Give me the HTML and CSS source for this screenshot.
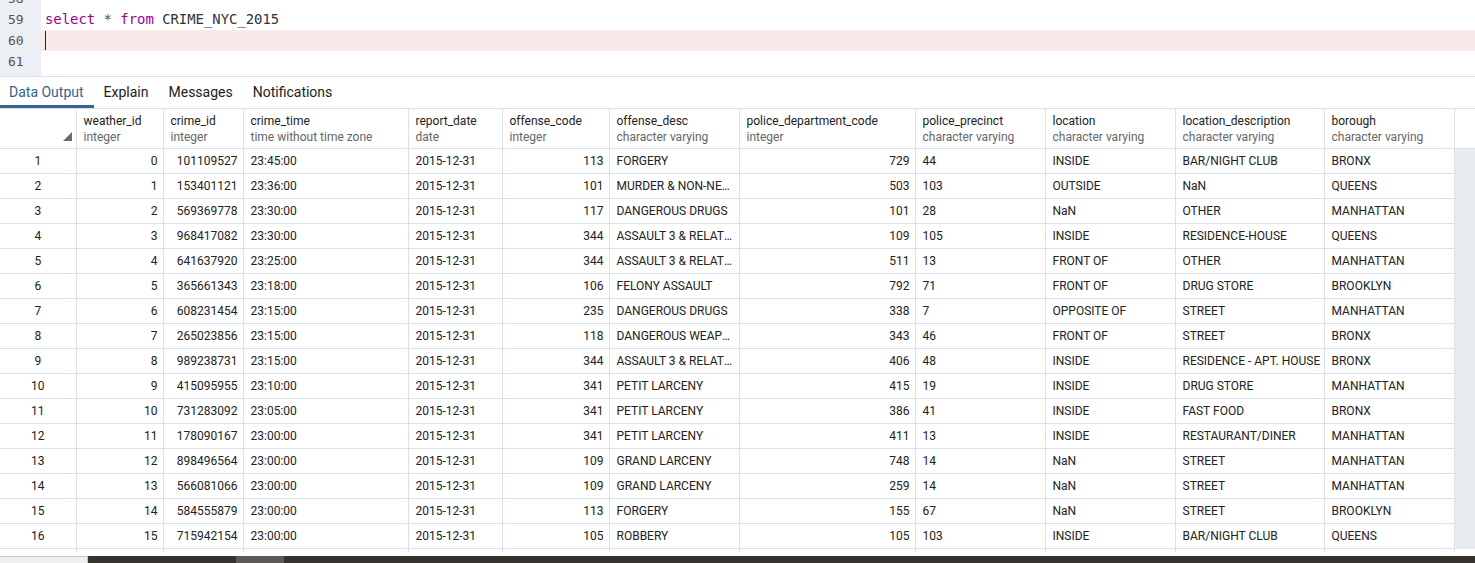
FILE: index.html
```html
<!DOCTYPE html>
<html>
<head>
<meta charset="utf-8">
<link rel="stylesheet" href="styles.css">
</head>
<body>
<div class="editor">
  <div class="editor-inner">
    <div class="line"><span class="ln">58</span><span class="code"></span></div>
    <div class="line"><span class="ln">59</span><span class="code"><span class="kw">select</span> <span class="op">*</span> <span class="kw">from</span> CRIME_NYC_2015</span></div>
    <div class="line active"><span class="ln">60</span><span class="code"><span class="cursor"></span></span></div>
    <div class="line"><span class="ln">61</span><span class="code"></span></div>
    <div class="line"><span class="ln"></span><span class="code"></span></div>
  </div>
</div>
<div class="tabs">
  <div class="tab active">Data Output</div>
  <div class="tab">Explain</div>
  <div class="tab">Messages</div>
  <div class="tab">Notifications</div>
</div>
<div class="grid">
  <table class="data">
    <colgroup>
      <col style="width:76px"><col style="width:87px"><col style="width:80px"><col style="width:165px"><col style="width:94px"><col style="width:107px"><col style="width:130px"><col style="width:176px"><col style="width:130px"><col style="width:130px"><col style="width:149px"><col style="width:130px">
    </colgroup>
    <thead>
      <tr>
        <th class="rn-head"><svg class="sort" width="10" height="10" viewBox="0 0 10 10"><polygon points="10,0 10,9 1,9" fill="#6b6b6b"/></svg></th>
        <th><div class="cn">weather_id</div><div class="ct">integer</div></th>
        <th><div class="cn">crime_id</div><div class="ct">integer</div></th>
        <th><div class="cn">crime_time</div><div class="ct">time without time zone</div></th>
        <th><div class="cn">report_date</div><div class="ct">date</div></th>
        <th><div class="cn">offense_code</div><div class="ct">integer</div></th>
        <th><div class="cn">offense_desc</div><div class="ct">character varying</div></th>
        <th><div class="cn">police_department_code</div><div class="ct">integer</div></th>
        <th><div class="cn">police_precinct</div><div class="ct">character varying</div></th>
        <th><div class="cn">location</div><div class="ct">character varying</div></th>
        <th><div class="cn">location_description</div><div class="ct">character varying</div></th>
        <th><div class="cn">borough</div><div class="ct">character varying</div></th>
      </tr>
    </thead>
    <tbody>
      <tr><td class="rn">1</td><td class="num">0</td><td class="num">101109527</td><td>23:45:00</td><td>2015-12-31</td><td class="num">113</td><td>FORGERY</td><td class="num">729</td><td>44</td><td>INSIDE</td><td class="ld">BAR/NIGHT CLUB</td><td>BRONX</td></tr>
      <tr><td class="rn">2</td><td class="num">1</td><td class="num">153401121</td><td>23:36:00</td><td>2015-12-31</td><td class="num">101</td><td>MURDER &amp; NON-NEGL. MANSLAUGHTER</td><td class="num">503</td><td>103</td><td>OUTSIDE</td><td class="ld">NaN</td><td>QUEENS</td></tr>
      <tr><td class="rn">3</td><td class="num">2</td><td class="num">569369778</td><td>23:30:00</td><td>2015-12-31</td><td class="num">117</td><td>DANGEROUS DRUGS</td><td class="num">101</td><td>28</td><td>NaN</td><td class="ld">OTHER</td><td>MANHATTAN</td></tr>
      <tr><td class="rn">4</td><td class="num">3</td><td class="num">968417082</td><td>23:30:00</td><td>2015-12-31</td><td class="num">344</td><td>ASSAULT 3 &amp; RELATED OFFENSES</td><td class="num">109</td><td>105</td><td>INSIDE</td><td class="ld">RESIDENCE-HOUSE</td><td>QUEENS</td></tr>
      <tr><td class="rn">5</td><td class="num">4</td><td class="num">641637920</td><td>23:25:00</td><td>2015-12-31</td><td class="num">344</td><td>ASSAULT 3 &amp; RELATED OFFENSES</td><td class="num">511</td><td>13</td><td>FRONT OF</td><td class="ld">OTHER</td><td>MANHATTAN</td></tr>
      <tr><td class="rn">6</td><td class="num">5</td><td class="num">365661343</td><td>23:18:00</td><td>2015-12-31</td><td class="num">106</td><td>FELONY ASSAULT</td><td class="num">792</td><td>71</td><td>FRONT OF</td><td class="ld">DRUG STORE</td><td>BROOKLYN</td></tr>
      <tr><td class="rn">7</td><td class="num">6</td><td class="num">608231454</td><td>23:15:00</td><td>2015-12-31</td><td class="num">235</td><td>DANGEROUS DRUGS</td><td class="num">338</td><td>7</td><td>OPPOSITE OF</td><td class="ld">STREET</td><td>MANHATTAN</td></tr>
      <tr><td class="rn">8</td><td class="num">7</td><td class="num">265023856</td><td>23:15:00</td><td>2015-12-31</td><td class="num">118</td><td>DANGEROUS WEAPONS</td><td class="num">343</td><td>46</td><td>FRONT OF</td><td class="ld">STREET</td><td>BRONX</td></tr>
      <tr><td class="rn">9</td><td class="num">8</td><td class="num">989238731</td><td>23:15:00</td><td>2015-12-31</td><td class="num">344</td><td>ASSAULT 3 &amp; RELATED OFFENSES</td><td class="num">406</td><td>48</td><td>INSIDE</td><td class="ld">RESIDENCE - APT. HOUSE</td><td>BRONX</td></tr>
      <tr><td class="rn">10</td><td class="num">9</td><td class="num">415095955</td><td>23:10:00</td><td>2015-12-31</td><td class="num">341</td><td>PETIT LARCENY</td><td class="num">415</td><td>19</td><td>INSIDE</td><td class="ld">DRUG STORE</td><td>MANHATTAN</td></tr>
      <tr><td class="rn">11</td><td class="num">10</td><td class="num">731283092</td><td>23:05:00</td><td>2015-12-31</td><td class="num">341</td><td>PETIT LARCENY</td><td class="num">386</td><td>41</td><td>INSIDE</td><td class="ld">FAST FOOD</td><td>BRONX</td></tr>
      <tr><td class="rn">12</td><td class="num">11</td><td class="num">178090167</td><td>23:00:00</td><td>2015-12-31</td><td class="num">341</td><td>PETIT LARCENY</td><td class="num">411</td><td>13</td><td>INSIDE</td><td class="ld">RESTAURANT/DINER</td><td>MANHATTAN</td></tr>
      <tr><td class="rn">13</td><td class="num">12</td><td class="num">898496564</td><td>23:00:00</td><td>2015-12-31</td><td class="num">109</td><td>GRAND LARCENY</td><td class="num">748</td><td>14</td><td>NaN</td><td class="ld">STREET</td><td>MANHATTAN</td></tr>
      <tr><td class="rn">14</td><td class="num">13</td><td class="num">566081066</td><td>23:00:00</td><td>2015-12-31</td><td class="num">109</td><td>GRAND LARCENY</td><td class="num">259</td><td>14</td><td>NaN</td><td class="ld">STREET</td><td>MANHATTAN</td></tr>
      <tr><td class="rn">15</td><td class="num">14</td><td class="num">584555879</td><td>23:00:00</td><td>2015-12-31</td><td class="num">113</td><td>FORGERY</td><td class="num">155</td><td>67</td><td>NaN</td><td class="ld">STREET</td><td>BROOKLYN</td></tr>
      <tr><td class="rn">16</td><td class="num">15</td><td class="num">715942154</td><td>23:00:00</td><td>2015-12-31</td><td class="num">105</td><td>ROBBERY</td><td class="num">105</td><td>103</td><td>INSIDE</td><td class="ld">BAR/NIGHT CLUB</td><td>QUEENS</td></tr>
      <tr><td class="rn">17</td><td class="num">16</td><td class="num">219934580</td><td>23:00:00</td><td>2015-12-31</td><td class="num">341</td><td>PETIT LARCENY</td><td class="num">331</td><td>40</td><td>INSIDE</td><td class="ld">STREET</td><td>BRONX</td></tr>
    </tbody>
  </table>
  <div class="filler">
    <div class="filler-head"></div>
    <div class="filler-body"></div>
  </div>
</div>
<div class="hscroll">
  <div class="hs-left"></div>
  <div class="hs-track"><div class="hs-thumb"></div></div>
</div>
</body>
</html>
```

FILE: styles.css
```css
html, body {
  margin: 0;
  padding: 0;
  background: #fff;
  width: 1475px;
  height: 563px;
  overflow: hidden;
  font-family: Roboto, "Liberation Sans", sans-serif;
}

.editor {
  height: 76px;
  overflow: hidden;
  display: flex;
  flex-direction: column;
  background: linear-gradient(to right, #eceff3 0, #eceff3 41px, #fff 41px);
  border-bottom: 1px solid #dcdfe6;
}

.editor-inner {
  margin-top: -12px;
}

.line {
  display: flex;
  height: 21px;
  line-height: 21px;
  font-family: "DejaVu Sans Mono", "Liberation Mono", monospace;
  font-size: 13.9px;
  color: #333;
}

.line .ln {
  width: 41px;
  flex: none;
  box-sizing: border-box;
  padding-left: 8px;
  color: #555;
  font-size: 13px;
  background: #eceff3;
}

.line .code {
  flex: 1;
  padding-left: 4px;
  white-space: pre;
}

.line.active .code {
  background: #f9e9e9;
}

.kw {
  color: #990099;
}

.op {
  color: #555;
}

.cursor {
  display: inline-block;
  width: 1px;
  height: 19px;
  vertical-align: middle;
  background: #222;
  margin-top: -2px;
}

.tabs {
  display: flex;
  height: 31px;
  border-bottom: 1px solid #dcdfe6;
}

.tab {
  padding: 0 10px;
  font-size: 14px;
  line-height: 30px;
  color: #222;
  box-sizing: border-box;
  height: 31px;
}

.tab:first-child {
  padding-left: 9px;
}

.tab.active {
  color: #326690;
  border-bottom: 3px solid #326690;
}

.grid {
  display: flex;
  height: 443px;
  overflow: hidden;
}

.data {
  border-collapse: collapse;
  table-layout: fixed;
  width: 1454px;
  flex: none;
  font-size: 12px;
  color: #222;
}

.data th, .data td {
  border: 1px solid #dde0e6;
  padding: 0 5px 0 7px;
  white-space: nowrap;
  overflow: hidden;
  text-overflow: ellipsis;
}

.data td.ld {
  padding-right: 0;
}

.data tr > :first-child {
  border-left: none;
}

.data thead tr th {
  border-top: none;
  height: 39px;
  text-align: left;
  vertical-align: top;
  font-weight: normal;
  padding-top: 4px;
  box-sizing: border-box;
}

.cn {
  color: #222;
  font-size: 12px;
  line-height: 16px;
}

.ct {
  color: #666;
  font-size: 12px;
  line-height: 16px;
}

.rn-head {
  position: relative;
}

.sort {
  position: absolute;
  right: 4px;
  bottom: 6px;
}

.data td {
  height: 24px;
  line-height: 24px;
  box-sizing: border-box;
}

.data td.rn {
  text-align: center;
  padding: 0;
}

.data td.num {
  text-align: right;
}

.filler {
  flex: 1;
  display: flex;
  flex-direction: column;
}

.filler-head {
  height: 39px;
  border-bottom: 1px solid #dde0e6;
  background: #fff;
}

.filler-body {
  background: #e8ebf0;
  height: 400px;
}

.hscroll {
  margin-top: 4px;
  display: flex;
  height: 7px;
}

.hs-left {
  width: 87px;
  background: #f0f0f0;
  border-top: 1px solid #c8c8c8;
  border-right: 1px solid #c8c8c8;
}

.hs-track {
  flex: 1;
  background: #36332f;
  display: flex;
}

.hs-thumb {
  margin-left: 148px;
  width: 48px;
  background: #5d5a56;
}
```
